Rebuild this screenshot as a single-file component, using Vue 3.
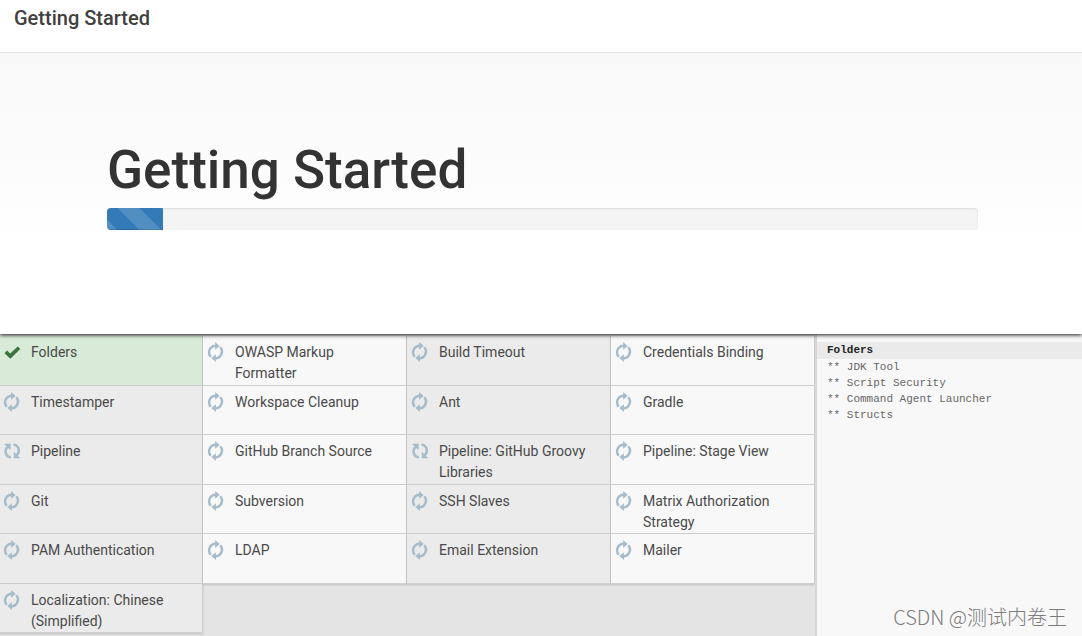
<script setup>
const plugins = [
  { name: 'Folders', state: 'done' },
  { name: 'OWASP Markup Formatter' },
  { name: 'Build Timeout' },
  { name: 'Credentials Binding' },
  { name: 'Timestamper' },
  { name: 'Workspace Cleanup' },
  { name: 'Ant' },
  { name: 'Gradle' },
  { name: 'Pipeline', state: 'turning' },
  { name: 'GitHub Branch Source' },
  { name: 'Pipeline: GitHub Groovy Libraries', state: 'turning' },
  { name: 'Pipeline: Stage View' },
  { name: 'Git' },
  { name: 'Subversion' },
  { name: 'SSH Slaves' },
  { name: 'Matrix Authorization Strategy' },
  { name: 'PAM Authentication' },
  { name: 'LDAP' },
  { name: 'Email Extension' },
  { name: 'Mailer' },
  { name: 'Localization: Chinese (Simplified)' },
]
const dependencies = ['JDK Tool', 'Script Security', 'Command Agent Launcher', 'Structs']
</script>

<template>
  <div class="wizard">
    <header class="bar">
      <h4>Getting Started</h4>
    </header>
    <section class="hero">
      <h1 id="install-title">Getting Started</h1>
      <div class="progress" role="progressbar" aria-labelledby="install-title" aria-valuenow="6" aria-valuemin="0" aria-valuemax="100">
        <div class="fill"></div>
      </div>
    </section>
    <main class="install">
      <div class="plugins">
        <ul class="grid">
          <li v-for="p in plugins" :key="p.name" :class="p.state">
            <svg v-if="p.state === 'done'" class="icon" viewBox="0 0 20 20" aria-hidden="true">
              <path d="M2.6 11.2 5.4 8.4 8.6 11.6 16.6 4.2 19.2 6.8 8.8 17Z" fill="#3c763d" />
            </svg>
            <svg v-else-if="p.state === 'turning'" class="icon" viewBox="0 0 20 20" aria-hidden="true">
              <g fill="none" stroke="#a6bccb" stroke-width="2.6">
                <path d="M6 5.4C2.2 9 3.2 15.4 9.2 17" />
                <path d="M15.4 14.6C19.2 11 18.2 4.6 12.2 3" />
              </g>
              <path d="M2.2 2.4H9V9.2ZM19.2 17.6H12.4V10.8Z" fill="#a6bccb" />
            </svg>
            <svg v-else class="icon" viewBox="0 0 20 20" aria-hidden="true">
              <g fill="none" stroke="#a6bccb" stroke-width="2.6">
                <path d="M5 15A7 7 0 0 1 10.4 3.4" />
                <path d="M15 5A7 7 0 0 1 9.6 16.6" />
              </g>
              <path d="M9.6 -0.4 14.4 3.6 9.6 7.6ZM10.4 20.4 5.6 16.4 10.4 12.4Z" fill="#a6bccb" />
            </svg>
            <span>{{ p.name }}</span>
          </li>
        </ul>
      </div>
      <aside class="log">
        <strong>Folders</strong>
        <ul>
          <li v-for="d in dependencies" :key="d">** {{ d }}</li>
        </ul>
        <p class="mark">CSDN @测试内卷王</p>
      </aside>
    </main>
  </div>
</template>

<style>
body {
  margin: 0;
}
</style>

<style scoped>
.wizard {
  display: flex;
  flex-direction: column;
  min-height: 100vh;
  background: #fff;
  color: #333;
  font-family: Roboto, 'Liberation Sans', sans-serif;
}
h1, h4, ul, p {
  margin: 0;
  padding: 0;
  font-weight: 500;
  list-style: none;
}
.bar {
  position: relative;
  z-index: 2;
  padding: 7px 14px 23px;
  border-bottom: 1px solid #e5e5e5;
  background: #fff;
}
h4 {
  font-size: 20px;
  line-height: 22px;
  color: #404040;
}
.hero {
  position: relative;
  z-index: 1;
  padding: 89px 104px 104px 107px;
  background: linear-gradient(#f8f8f8, #fff 70%);
  box-shadow: 0 1px 4px rgba(0, 0, 0, 0.9);
}
h1 {
  font-size: 53px;
  line-height: 56px;
}
.progress {
  height: 22px;
  margin-top: 10px;
  border-radius: 4px;
  background: #f4f4f4;
  box-shadow: inset 0 1px 2px rgba(0, 0, 0, 0.1);
  overflow: hidden;
}
.fill {
  width: 56px;
  height: 100%;
  background: linear-gradient(45deg, rgba(255, 255, 255, 0.15) 25%, transparent 25%, transparent 50%, rgba(255, 255, 255, 0.15) 50%, rgba(255, 255, 255, 0.15) 75%, transparent 75%) 11px 0 / 44px 44px #337ab7;
  box-shadow: inset 0 -1px 0 rgba(0, 0, 0, 0.15);
}
.install {
  flex: 1;
  display: grid;
  grid-template-columns: 1fr 267px;
  overflow: hidden;
}
.plugins {
  padding-top: 2px;
  background: #e4e4e4;
}
.grid {
  display: grid;
  grid-template-columns: repeat(4, 1fr);
  grid-template-rows: repeat(6, 1fr);
  min-height: 297px;
  margin-left: -1px;
}
.grid li {
  display: flex;
  gap: 10px;
  padding: 6px 12px 0 3px;
  border-right: 1px solid #cfcfcf;
  border-bottom: 1px solid #d0d0d0;
  box-shadow: 0 1px 2px rgba(0, 0, 0, 0.16);
  background: #f8f8f8;
  font-size: 14px;
  font-weight: 400;
  line-height: 21px;
  color: #4a4a4a;
}
.grid li:nth-child(odd) {
  background: #ebebeb;
}
.grid li.done {
  background: #d8ebd8;
}
.icon {
  flex: none;
  width: 19px;
  height: 20px;
  overflow: visible;
}
.log {
  display: flex;
  flex-direction: column;
  padding-top: 8px;
  border-left: 2px solid #d6d6d6;
  background: #f8f8f8;
  font-family: 'Liberation Mono', monospace;
  font-size: 11px;
  color: #666;
}
.log strong {
  padding-left: 10px;
  background: #eaeaea;
  line-height: 17px;
  color: #222;
}
.log ul {
  display: grid;
  grid-auto-rows: 1fr;
  height: 62px;
  padding-left: 10px;
  line-height: 16px;
}
.mark {
  margin-top: auto;
  padding: 0 15px 7px 0;
  font: 300 20px/24px 'Noto Sans CJK SC', sans-serif;
  text-align: right;
  white-space: nowrap;
  color: #7c7c7c;
}
</style>
